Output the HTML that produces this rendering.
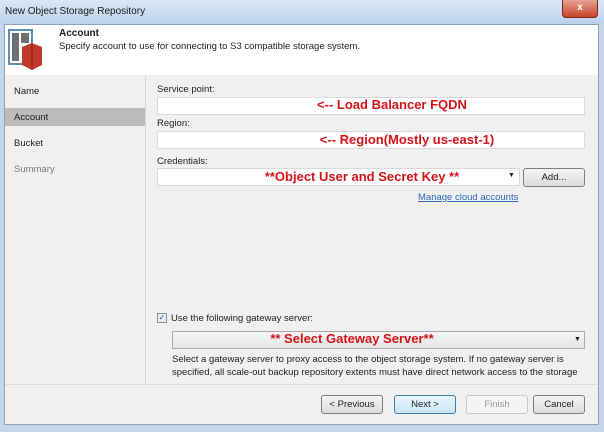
<!DOCTYPE html>
<html><head><style>
*{margin:0;padding:0;box-sizing:border-box}
body{width:604px;height:432px;overflow:hidden;background:#c3d6ea;font-family:"Liberation Sans",sans-serif;font-size:9.5px;color:#1e1e1e;position:relative}
.abs{position:absolute}
.title{left:0;top:0;width:604px;height:24px;background:linear-gradient(#d9e7f5,#bcd2ea);}
.title span{position:absolute;left:5px;top:6px;font-size:10px;color:#1a1a1a}
.close{left:562px;top:0;width:36px;height:18px;background:linear-gradient(#e8a392,#c7432a);border:1px solid #7a2a1c;border-top:none;border-radius:0 0 4px 4px;color:#fff;font-size:10px;font-weight:bold;text-align:center;line-height:16px}
.win{left:4px;top:24px;width:595px;height:401px;background:#f0f0f0;border:1px solid #8ba2bd}
.hdr{left:5px;top:25px;width:593px;height:50px;background:#fff}
.nav{left:5px;top:75px;width:141px;height:309px;background:#f0f0f0;border-right:1px solid #d6d6d6}
.inp{background:#fff;border:1px solid #d9d9d9;height:18px}
.red{color:#d5141a;font-weight:bold;font-size:13px;text-align:center;white-space:nowrap}
.btn{height:19px;border:1px solid #7f7f7f;border-radius:3px;background:linear-gradient(#f4f4f4,#dcdcdc);text-align:center;line-height:17px;font-size:9.5px}
</style></head><body>
<div class="abs title"><span>New Object Storage Repository</span></div>
<div class="abs close">x</div>
<div class="abs win"></div>
<div class="abs hdr"></div>
<svg class="abs" style="left:8px;top:29px" width="36" height="42" viewBox="0 0 36 42">
<rect x="1" y="1" width="23" height="34" fill="#fff" stroke="#5c8fb8" stroke-width="2"/>
<rect x="4" y="4" width="7" height="28" fill="#707070"/><rect x="13" y="4" width="8" height="10" fill="#707070"/>
<path d="M14 18 L24 14 L34 18 L34 36 L24 41 L14 36Z" fill="#c0392b"/><path d="M24 14 L24 41" stroke="#8e1c12"/>
</svg>
<div class="abs" style="left:59px;top:28px;font-weight:bold;font-size:10px">Account</div>
<div class="abs" style="left:59px;top:41px">Specify account to use for connecting to S3 compatible storage system.</div>
<div class="abs nav"></div>
<div class="abs" style="left:14px;top:86px">Name</div>
<div class="abs" style="left:5px;top:108px;width:140px;height:18px;background:#bcbcbc"></div>
<div class="abs" style="left:14px;top:112px">Account</div>
<div class="abs" style="left:14px;top:138px">Bucket</div>
<div class="abs" style="left:14px;top:164px;color:#7a7a7a">Summary</div>
<div class="abs" style="left:157px;top:84px">Service point:</div>
<div class="abs inp" style="left:157px;top:97px;width:428px"></div>
<div class="abs red" style="left:157px;top:97px;width:470px">&lt;-- Load Balancer FQDN</div>
<div class="abs" style="left:157px;top:118px">Region:</div>
<div class="abs inp" style="left:157px;top:131px;width:428px"></div>
<div class="abs red" style="left:157px;top:132px;width:500px">&lt;-- Region(Mostly us-east-1)</div>
<div class="abs" style="left:157px;top:156px">Credentials:</div>
<div class="abs inp" style="left:157px;top:168px;width:363px"></div>
<div class="abs red" style="left:157px;top:169px;width:410px">**Object User and Secret Key **</div>
<div class="abs" style="left:508px;top:172px;font-size:7px">▼</div>
<div class="abs btn" style="left:523px;top:168px;width:62px">Add...</div>
<div class="abs" style="left:418px;top:192px;color:#2a6bb8;text-decoration:underline">Manage cloud accounts</div>
<div class="abs" style="left:157px;top:313px;width:10px;height:10px;border:1px solid #8f8f8f;background:#e8eef6;font-size:8px;line-height:8px;text-align:center;color:#3a4a7a">✓</div>
<div class="abs" style="left:171px;top:313px">Use the following gateway server:</div>
<div class="abs inp" style="left:172px;top:331px;width:413px;height:18px;border-color:#aaa;background:linear-gradient(#f6f6f6,#e6e6e6)"></div>
<div class="abs red" style="left:172px;top:331px;width:360px">** Select Gateway Server**</div>
<div class="abs" style="left:574px;top:336px;font-size:7px">▼</div>
<div class="abs" style="left:172px;top:353px;line-height:13px;width:420px">Select a gateway server to proxy access to the object storage system. If no gateway server is specified, all scale-out backup repository extents must have direct network access to the storage</div>
<div class="abs" style="left:5px;top:384px;width:593px;height:1px;background:#dcdcdc"></div>
<div class="abs btn" style="left:321px;top:395px;width:62px">&lt; Previous</div>
<div class="abs btn" style="left:394px;top:395px;width:62px;border-color:#3c7fb1;background:linear-gradient(#eaf6fd,#c6e4f7)">Next &gt;</div>
<div class="abs btn" style="left:466px;top:395px;width:62px;border-color:#c8c8c8;color:#9a9a9a;background:#f4f4f4">Finish</div>
<div class="abs btn" style="left:533px;top:395px;width:52px">Cancel</div>
</body></html>
